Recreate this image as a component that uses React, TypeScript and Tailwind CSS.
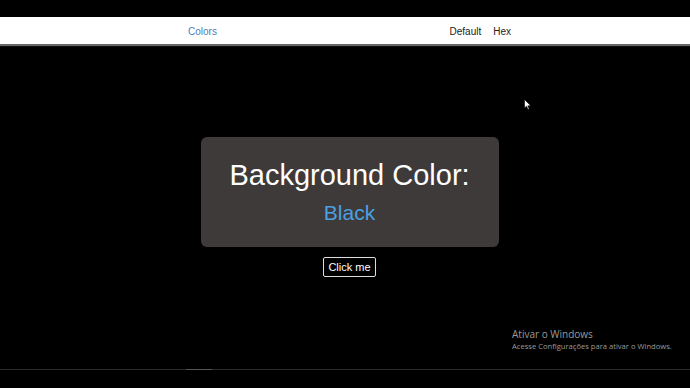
export default function App() {
  return (
    <div
      className="relative h-[388px] w-[690px] overflow-hidden bg-black"
      style={{ fontFamily: '"Liberation Sans", Arial, sans-serif' }}
    >
      <div className="h-[17px]" />
      {/* navbar */}
      <nav className="flex h-[27px] items-center bg-white pt-[2px] text-[10px] shadow-[0_2px_1px_#666]">
        <a className="ml-[188px] text-[#4f7cb8]">Colors</a>
        <div className="ml-auto mr-[179px] flex gap-[12px] text-[#222]">
          <span className="ml-[2px]">Default</span>
          <span>Hex</span>
        </div>
      </nav>

      <main className="flex flex-col items-center pl-[9px] pt-[93px]">
        <div className="flex h-[110px] w-[298px] flex-col items-center rounded-[6px] bg-[#3e3a3a] pt-[20px]">
          <h1 className="text-[29px] leading-[36px] text-white">Background Color:</h1>
          <p className="mt-[7px] text-[21px] leading-[26px] text-[#4aa0e2]">Black</p>
        </div>
        <button className="mt-[10px] rounded-[2px] border border-[#ddd] px-[4px] py-[1px] text-[11px] leading-[16px] text-white">
          Click me
        </button>
      </main>

      {/* windows activation watermark */}
      <div className="absolute left-[512px] top-[327px] text-[#9a9a9a]" style={{ fontFamily: '"Open Sans", sans-serif' }}>
        <p className="text-[10px] leading-[14px]">Ativar o Windows</p>
        <p className="text-[7.6px] leading-[11px]">Acesse Configurações para ativar o Windows.</p>
      </div>

      <div className="absolute left-0 top-[369px] h-px w-full bg-[#2a2a2a]" />
      <div className="absolute left-[186px] top-[369px] h-px w-[26px] bg-[#555]" />

      {/* mouse cursor */}
      <svg className="absolute left-[524px] top-[99px]" width="8" height="12" viewBox="0 0 8 12">
        <path d="M0.5 0.5 L0.5 9 L2.6 7.2 L4 10.5 L5.2 10 L3.9 6.8 L6.8 6.8 Z" fill="#fff" stroke="#000" strokeWidth="0.6" />
      </svg>
    </div>
  );
}
